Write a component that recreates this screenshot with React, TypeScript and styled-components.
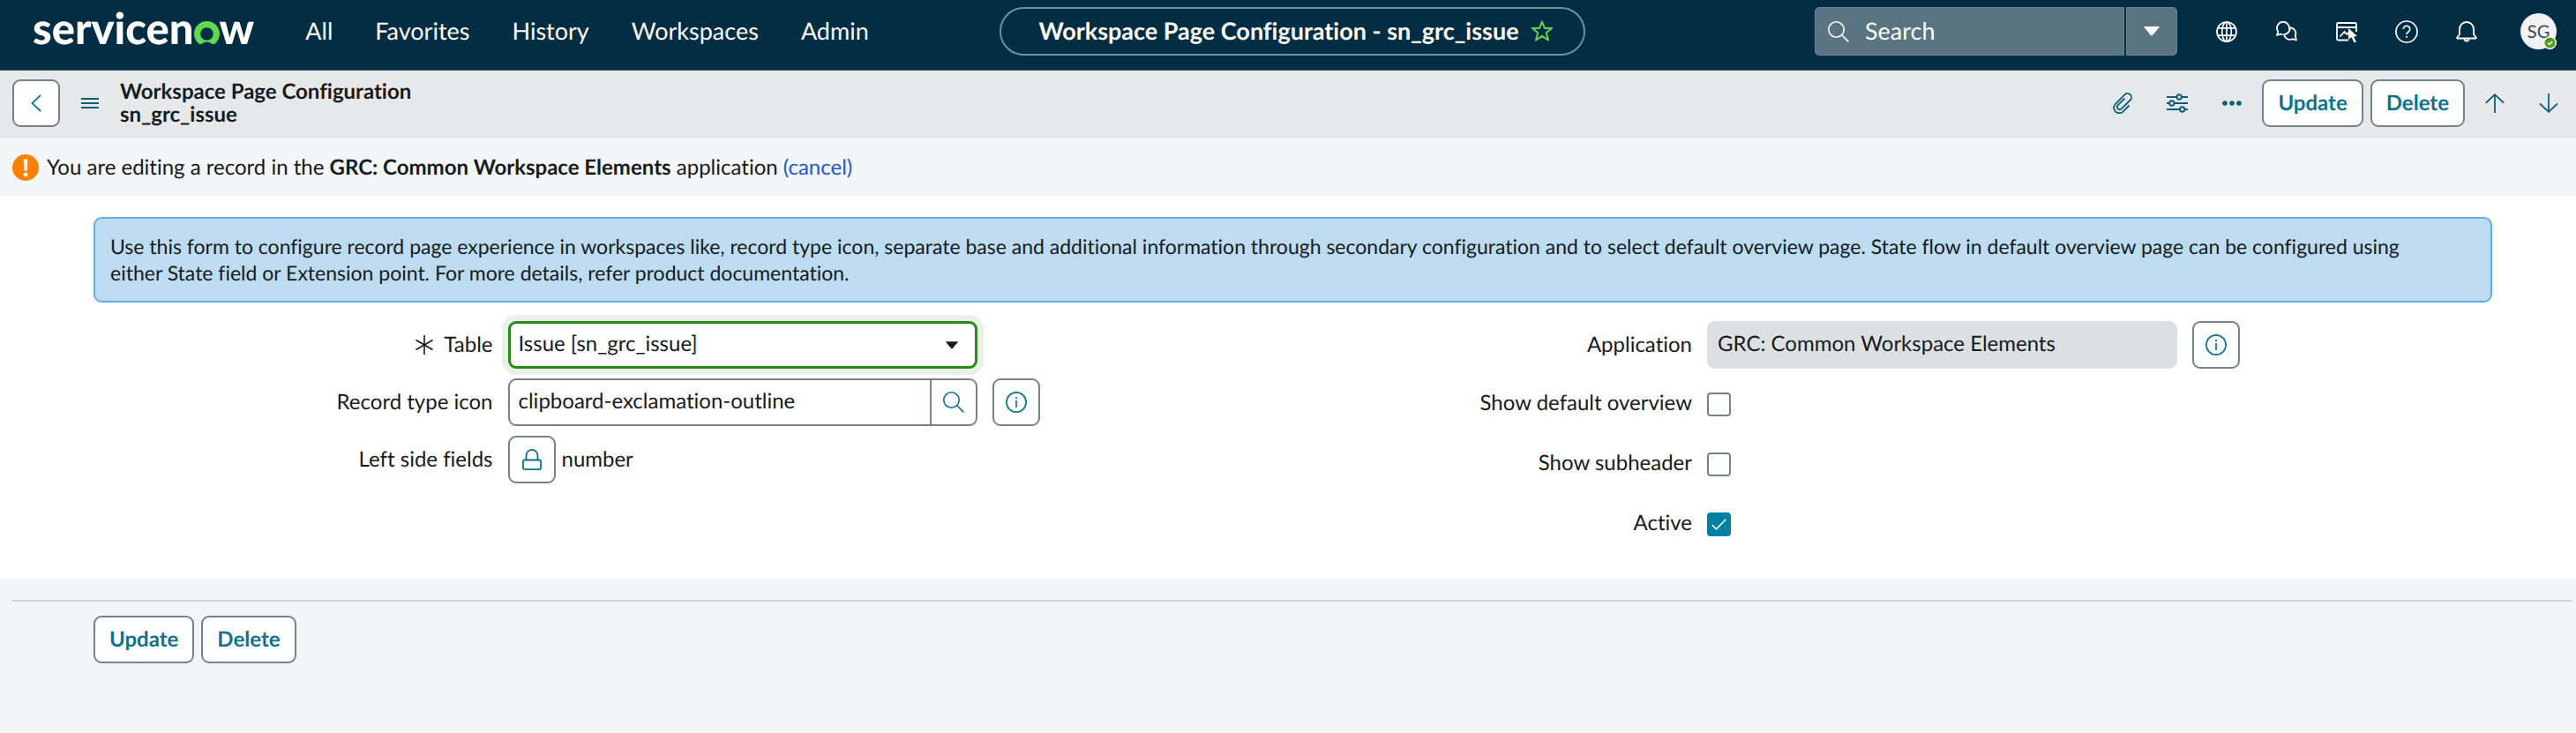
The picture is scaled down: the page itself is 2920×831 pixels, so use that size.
import React from "react";
import styled, { createGlobalStyle, css } from "styled-components";

const teal = "#0b7391";
const tealDark = "#0c5f79";

const GlobalStyle = createGlobalStyle`
  * { box-sizing: border-box; }
  html { height: 100%; background: #f4f5f7; }
  body {
    margin: 0;
    font-family: Lato, "Liberation Sans", sans-serif;
    font-size: 24px;
    line-height: 30px;
    font-variant-ligatures: none;
    text-rendering: geometricPrecision;
    color: #161b1c;
  }
  button, input, select {
    font: inherit;
    font-variant-ligatures: none;
    text-rendering: geometricPrecision;
    color: inherit;
    margin: 0;
  }
  button { cursor: pointer; }
`;

/* ---------- Global navigation ---------- */

const TopBar = styled.header`
  display: flex;
  align-items: flex-start;
  justify-content: space-between;
  height: 80px;
  padding: 8px 22px 0 37px;
  background: #032d42;
  border-bottom: 1px solid #2a4f62;
  color: #fff;
`;

const BarSide = styled.div<{ $end?: boolean }>`
  display: flex;
  flex: 1 1 0;
  align-items: center;
  justify-content: ${(p) => (p.$end ? "flex-end" : "flex-start")};
  height: 55px;
  min-width: 0;
`;

const Logo = styled.a`
  display: flex;
  align-items: baseline;
  margin: 0 58px 6px 0;
  color: #fff;
  font-size: 49px;
  font-weight: 900;
  line-height: 49px;
  text-decoration: none;

  svg { width: 29px; height: 26px; overflow: visible; }
`;

const Nav = styled.nav`
  display: flex;
  gap: 48px;
  padding-bottom: 2px;

  a {
    color: #fff;
    font-size: 27px;
    text-decoration: none;
  }
`;

const TitlePill = styled.div`
  display: flex;
  align-items: center;
  gap: 14px;
  height: 55px;
  margin-right: 5px;
  padding: 0 35px 2px 42px;
  border: 2px solid #74909b;
  border-radius: 28px;
  font-size: 27px;
  font-weight: 700;
  white-space: nowrap;
`;

const PlainButton = styled.button<{ $tone?: string }>`
  display: inline-flex;
  align-items: center;
  justify-content: center;
  padding: 0;
  border: 0;
  background: none;
  color: ${(p) => p.$tone ?? "inherit"};
`;

const SearchGroup = styled.div`
  display: flex;
  gap: 2px;
  height: 55px;
`;

const SearchField = styled.label`
  display: flex;
  align-items: center;
  gap: 18px;
  width: 351px;
  padding: 0 14px;
  border: 1px solid #6b8390;
  border-radius: 5px 0 0 5px;
  background: #5b7482;

  input {
    flex: 1;
    min-width: 0;
    padding: 0 0 2px;
    border: 0;
    outline: 0;
    background: none;
    font-size: 27px;
  }
  input::placeholder { color: #fff; opacity: 1; }
`;

const SearchScope = styled.button`
  display: flex;
  align-items: center;
  justify-content: center;
  width: 58px;
  padding: 0;
  border: 1px solid #6b8390;
  border-radius: 0 5px 5px 0;
  background: #5b7482;
  color: #fff;
`;

const Utilities = styled.div`
  display: flex;
  align-items: center;
  gap: 44px;
  margin-left: 44px;
`;

const HelpButton = styled(PlainButton)`
  margin: 0 -1px;
`;

const Avatar = styled.button`
  position: relative;
  width: 41px;
  height: 41px;
  margin-left: 5px;
  padding: 0;
  border: 0;
  border-radius: 50%;
  background: #f1f2f3;
  color: #3c454b;
  font-size: 20px;

  svg { position: absolute; right: 0; bottom: 0; }
`;

/* ---------- Record header ---------- */

const RecordBar = styled.div`
  display: flex;
  align-items: center;
  height: 76px;
  padding: 0 20px 2px 14px;
  border-bottom: 1px solid #dddfe1;
  background: #e6e8ea;
`;

const buttonBox = css`
  height: 54px;
  border: 2px solid #74828a;
  border-radius: 9px;
  background: #fff;
  color: ${teal};
`;

const SquareButton = styled.button`
  ${buttonBox}
  display: inline-flex;
  align-items: center;
  justify-content: center;
  flex: none;
  width: 54px;
  padding: 0;
`;

const ActionButton = styled.button`
  ${buttonBox}
  padding: 0 16px;
  font-weight: 700;
`;

const ButtonPair = styled.div`
  display: flex;
  gap: 8px;
`;

const RecordTitle = styled.h1`
  margin: 0;
  font-size: 24px;
  font-weight: 700;
  line-height: 26px;

  span { display: block; }
`;

const Tools = styled.div`
  display: flex;
  align-items: center;
  gap: 39px;
  margin-left: auto;
`;

const MenuButton = styled(PlainButton)`
  margin: 0 24px;
`;

const ToolActions = styled(ButtonPair)`
  margin: 0 -16px;
`;

const Notice = styled.div`
  display: flex;
  align-items: center;
  gap: 9px;
  height: 67px;
  padding: 0 14px;
  background: #f4f5f7;

  p { margin: 0; }
  a { color: #2158d4; text-decoration: none; }
`;

/* ---------- Form ---------- */

const FormPanel = styled.form`
  padding: 23px 95px 42px 106px;
  background: #fff;
`;

const Hint = styled.p`
  margin: 0 0 21px;
  padding: 16px 48px 17px 17px;
  border: 2px solid #62b0e6;
  border-radius: 9px;
  background: #bddbf1;
  font-size: 23px;
`;

const Columns = styled.div`
  display: grid;
  grid-template-columns: 1fr 1fr;
`;

const Column = styled.div<{ $gap: number }>`
  display: flex;
  flex-direction: column;
  gap: ${(p) => p.$gap}px;
`;

const Row = styled.div`
  display: grid;
  grid-template-columns: 452fr 532fr 340fr;
  column-gap: 17px;
  align-items: center;
  min-height: 54px;
`;

const FieldLabel = styled.label`
  display: flex;
  align-items: center;
  justify-content: flex-end;
  gap: 12px;
  text-align: right;
`;

const SelectWrap = styled.div`
  display: grid;
  align-items: center;

  > * { grid-area: 1 / 1; }
  svg { justify-self: end; margin-right: 22px; pointer-events: none; }
`;

const Select = styled.select`
  appearance: none;
  width: 100%;
  height: 54px;
  padding: 0 9px 3px;
  border: 3px solid #278c14;
  border-radius: 9px;
  outline: 0;
  background: #fff;
  box-shadow: 0 0 0 7px #e9f2e7;
`;

const Lookup = styled.div`
  display: flex;
  height: 54px;
  overflow: hidden;
  border: 2px solid #74828a;
  border-radius: 9px;

  input {
    flex: 1;
    min-width: 0;
    padding: 0 10px 3px;
    border: 0;
    outline: 0;
    background: none;
  }
  button {
    width: 52px;
    border-left: 2px solid #74828a;
  }
`;

const ReadOnlyInput = styled.input`
  width: 100%;
  height: 54px;
  padding: 0 12px 3px;
  border: 0;
  border-radius: 9px;
  outline: 0;
  background: #dce0e3;
`;

const Locked = styled.div`
  display: flex;
  align-items: center;
  gap: 7px;
`;

const CheckRow = styled(Row)`
  min-height: 42px;
`;

const Checks = styled.div`
  display: flex;
  flex-direction: column;
  gap: 26px;
`;

const CheckWrap = styled.div`
  display: grid;
  align-items: center;
  justify-content: start;
  padding-top: 3px;

  > * { grid-area: 1 / 1; }
  svg { justify-self: center; pointer-events: none; }
`;

const Check = styled.input`
  appearance: none;
  width: 27px;
  height: 27px;
  margin: 0;
  border: 2px solid #74828a;
  border-radius: 4px;
  background: #fff;

  &:checked {
    border-color: #0080a3;
    background: #0080a3;
  }
`;

const Footer = styled.footer`
  padding: 24px 4px 0 14px;
`;

const Rule = styled.hr`
  height: 2px;
  margin: 0 0 16px;
  border: 0;
  background: #cfd2d4;
`;

const FooterActions = styled(ButtonPair)`
  padding-left: 92px;
`;

/* ---------- Icons ---------- */

type IconProps = { size?: number; w?: number; stroke?: number; children: React.ReactNode };

const Icon = ({ size = 24, w = size, stroke = 2, children }: IconProps) => (
  <svg
    width={w}
    height={size}
    viewBox={`0 0 ${w} ${size}`}
    fill="none"
    stroke="currentColor"
    strokeWidth={stroke}
    aria-hidden="true"
  >
    {children}
  </svg>
);

const SearchIcon = () => (
  <Icon stroke={1.6}>
    <circle cx="9.5" cy="9.5" r="8.7" />
    <path d="M15.8 15.8 23.4 23.4" />
  </Icon>
);

const InfoIcon = () => (
  <Icon stroke={1.7}>
    <circle cx="12" cy="12" r="11.1" />
    <path d="M12 9.8V18" />
    <path d="M12 6V8" />
  </Icon>
);

const LockIcon = () => (
  <Icon w={22} stroke={1.8}>
    <rect x="1" y="12.5" width="20" height="10.6" rx="1.6" />
    <path d="M4.5 12.5V7.4a6.5 6.5 0 0 1 13 0V12.5" />
  </Icon>
);

const Caret = ({ w = 16, h = 10 }: { w?: number; h?: number }) => (
  <svg width={w} height={h} viewBox="0 0 16 10" aria-hidden="true">
    <path d="M.6 0h14.8q1 0 .3.9L8.8 9q-.8.9-1.6 0L.3.9Q-.4 0 .6 0Z" fill="currentColor" />
  </svg>
);

const InfoButton = ({ label }: { label: string }) => (
  <SquareButton type="button" aria-label={label}>
    <InfoIcon />
  </SquareButton>
);

const CheckField = ({ id, label, checked }: { id: string; label: string; checked?: boolean }) => (
  <CheckRow>
    <FieldLabel htmlFor={id}>{label}</FieldLabel>
    <CheckWrap>
      <Check id={id} type="checkbox" defaultChecked={checked} />
      {checked && (
        <svg width="17" height="13" viewBox="0 0 17 13" fill="none" stroke="#fff" strokeWidth="1.6" aria-hidden="true">
          <path d="M.7 7 5.5 11.8 16.3.8" />
        </svg>
      )}
    </CheckWrap>
  </CheckRow>
);

export default function App() {
  return (
    <>
      <GlobalStyle />
      <TopBar>
        <BarSide>
          <Logo href="#" aria-label="servicenow">
            servicen
            <svg viewBox="0 0 29 26" aria-hidden="true">
              <path
                fill="#62d84e"
                d="M14.5 0C6.4 0 0 6.3 0 14.2 0 18.6 2 22.7 5.3 25.4c1 .9 2.6.9 3.7.1 1.5-1.1 3.4-1.7 5.5-1.7s4 .6 5.5 1.7c1.1.8 2.6.8 3.7-.1C27 22.7 29 18.6 29 14.2 29 6.3 22.6 0 14.5 0Zm0 21.5c-4.2 0-7.2-3.1-7.2-7.1s3-7.2 7.2-7.2 7.2 3.2 7.2 7.2-3 7.1-7.2 7.1Z"
              />
            </svg>
            w
          </Logo>
          <Nav aria-label="Main">
            {["All", "Favorites", "History", "Workspaces", "Admin"].map((item) => (
              <a key={item} href="#">
                {item}
              </a>
            ))}
          </Nav>
        </BarSide>

        <TitlePill>
          Workspace Page Configuration - sn_grc_issue
          <PlainButton type="button" aria-label="Add to favorites" $tone="#5fd64b">
            <Icon>
              <path strokeLinejoin="round" d="M12 1.5 15 9h8l-6.3 5.2L19 22.5l-7-4.6-7 4.6 2.3-8.3L1 9h8Z" />
            </Icon>
          </PlainButton>
        </TitlePill>

        <BarSide $end>
          <SearchGroup role="search">
            <SearchField>
              <SearchIcon />
              <input type="text" placeholder="Search" aria-label="Search" />
            </SearchField>
            <SearchScope type="button" aria-label="Search scope">
              <Caret w={18} h={11} />
            </SearchScope>
          </SearchGroup>
          <Utilities>
            <PlainButton type="button" aria-label="Scope">
              <Icon stroke={1.7}>
                <circle cx="12" cy="12" r="11" />
                <ellipse cx="12" cy="12" rx="5.3" ry="11" />
                <path d="M2 7.8H22M2 16.2H22M12 1V23" />
              </Icon>
            </PlainButton>
            <PlainButton type="button" aria-label="Conversations">
              <Icon stroke={1.8}>
                <path strokeLinejoin="round" d="M7.6 15.2 5.2 14.7 1 15.9 2.2 11.7A7 7 0 1 1 14.8 9.5" />
                <path
                  strokeLinejoin="round"
                  d="M15.8 7.3a6.6 6.6 0 0 1 6 9.3l1.2 4.9-4.7-1.3a6.7 6.7 0 0 1-9.3-5.1 7.2 7.2 0 0 0 6.8-7.8Z"
                />
              </Icon>
            </PlainButton>
            <PlainButton type="button" aria-label="Page preview">
              <Icon stroke={1.8}>
                <path d="M14 21.5H2.5A1.5 1.5 0 0 1 1 20V3.500A1.500 1.500 0 0 1 2.500 2h19A1.500 1.500 0 0 1 23 3.500V12M1 7H23M4.500 17.500 9.500 12l3 3 2.500-3" />
                <path d="M14 8 24 17l-4 .5 3 6-2.500 1-3-6.500L14 21Z" fill="currentColor" stroke="none" />
              </Icon>
            </PlainButton>
            <HelpButton type="button" aria-label="Help">
              <Icon size={26} stroke={1.7}>
                <circle cx="13" cy="13" r="12" />
                <path d="M9.3 10a3.7 3.7 0 1 1 5.6 3.2Q13 14.2 13 16" />
                <path d="M13 17.8v2" />
              </Icon>
            </HelpButton>
            <PlainButton type="button" aria-label="Notifications">
              <Icon stroke={1.8}>
                <path
                  strokeLinejoin="round"
                  d="M4 15V9a8 8 0 0 1 16 0v6l2.6 3.2q.8 1.3-.6 1.3H2q-1.4 0-.6-1.3ZM9.5 20a2.5 2.5 0 0 0 5 0"
                />
              </Icon>
            </PlainButton>
            <Avatar type="button" aria-label="SG, available">
              SG
              <svg width="15" height="15" viewBox="0 0 15 15" aria-hidden="true">
                <circle cx="7.5" cy="7.5" r="6.8" fill="#4ba00e" stroke="#fff" strokeWidth="1.4" />
                <path d="m5 7.7 1.8 1.7L10.2 6" fill="none" stroke="#fff" strokeWidth="1.6" />
              </svg>
            </Avatar>
          </Utilities>
        </BarSide>
      </TopBar>

      <RecordBar>
        <SquareButton type="button" aria-label="Back">
          <Icon size={20} w={12} stroke={1.8}>
            <path d="M11 .8 1.5 10 11 19.2" />
          </Icon>
        </SquareButton>
        <MenuButton type="button" aria-label="Record menu" $tone={tealDark}>
          <Icon size={14} w={20}>
            <path d="M0 2H20M0 7H20M0 12H20" />
          </Icon>
        </MenuButton>
        <RecordTitle>
          <span>Workspace Page Configuration</span>
          <span>sn_grc_issue</span>
        </RecordTitle>
        <Tools>
          <PlainButton type="button" aria-label="Attachments" $tone={tealDark}>
            <Icon w={22} stroke={1.8}>
              <path d="M18.5 14.5 11.8 21.3a6 6 0 0 1-9-8.3L13.3 2.3a4.3 4.3 0 0 1 6.4 6.2L10 18.2a2.9 2.9 0 0 1-4.2-4L13.5 6.5" />
            </Icon>
          </PlainButton>
          <PlainButton type="button" aria-label="Personalize form" $tone={tealDark}>
            <Icon stroke={1.9}>
              <path d="M0 5H11.5M17 5H24M0 12H3M8.5 12H24M0 19H15M20.5 19H24" />
              <circle cx="14.2" cy="5" r="2.7" />
              <circle cx="5.8" cy="12" r="2.7" />
              <circle cx="17.7" cy="19" r="2.7" />
            </Icon>
          </PlainButton>
          <PlainButton type="button" aria-label="More options" $tone={tealDark}>
            <svg width="22" height="6" viewBox="0 0 22 6" fill="currentColor" aria-hidden="true">
              <circle cx="3" cy="3" r="2.8" />
              <circle cx="11" cy="3" r="2.8" />
              <circle cx="19" cy="3" r="2.8" />
            </svg>
          </PlainButton>
          <ToolActions>
            <ActionButton type="button">Update</ActionButton>
            <ActionButton type="button">Delete</ActionButton>
          </ToolActions>
          <PlainButton type="button" aria-label="Previous record" $tone={tealDark}>
            <Icon size={22} w={22} stroke={1.8}>
              <path d="M11 22V1.5M1 10.5l10-9.3 10 9.3" />
            </Icon>
          </PlainButton>
          <PlainButton type="button" aria-label="Next record" $tone={tealDark}>
            <Icon size={22} w={22} stroke={1.8}>
              <path d="M11 0V20.5M1 11.5l10 9.3 10-9.3" />
            </Icon>
          </PlainButton>
        </Tools>
      </RecordBar>

      <Notice role="status">
        <svg width="30" height="30" viewBox="0 0 30 30" aria-hidden="true">
          <circle cx="15" cy="15" r="15" fill="#ff8000" />
          <path d="M12.8 5.5h4.4l-.4 13h-3.6Z" fill="#fff" />
          <circle cx="15" cy="23" r="2.4" fill="#fff" />
        </svg>
        <p>
          You are editing a record in the <b>GRC: Common Workspace Elements</b> application <a href="#">(cancel)</a>
        </p>
      </Notice>

      <FormPanel>
        <Hint>
          Use this form to configure record page experience in workspaces like, record type icon, separate base and
          additional information through secondary configuration and to select default overview page. State flow in
          default overview page can be configured using either State field or Extension point. For more details, refer
          product documentation.
        </Hint>
        <Columns>
          <Column $gap={11}>
            <Row>
              <FieldLabel htmlFor="table">
                <Icon size={22} w={20} stroke={1.6}>
                  <path d="M10 0V22M.5 5.5l19 11M19.5 5.5.5 16.5" />
                </Icon>
                Table
              </FieldLabel>
              <SelectWrap>
                <Select id="table">
                  <option>Issue [sn_grc_issue]</option>
                </Select>
                <Caret w={14} h={9} />
              </SelectWrap>
            </Row>
            <Row>
              <FieldLabel htmlFor="icon">Record type icon</FieldLabel>
              <Lookup>
                <input id="icon" type="text" defaultValue="clipboard-exclamation-outline" />
                <PlainButton type="button" aria-label="Look up icon" $tone={teal}>
                  <SearchIcon />
                </PlainButton>
              </Lookup>
              <InfoButton label="Preview icon record" />
            </Row>
            <Row>
              <FieldLabel as="span">Left side fields</FieldLabel>
              <Locked>
                <SquareButton type="button" aria-label="Unlock left side fields">
                  <LockIcon />
                </SquareButton>
                number
              </Locked>
            </Row>
          </Column>
          <Column $gap={18}>
            <Row>
              <FieldLabel htmlFor="application">Application</FieldLabel>
              <ReadOnlyInput id="application" type="text" readOnly value="GRC: Common Workspace Elements" />
              <InfoButton label="Preview application record" />
            </Row>
            <Checks>
              <CheckField id="overview" label="Show default overview" />
              <CheckField id="subheader" label="Show subheader" />
              <CheckField id="active" label="Active" checked />
            </Checks>
          </Column>
        </Columns>
      </FormPanel>

      <Footer>
        <Rule />
        <FooterActions>
          <ActionButton type="button">Update</ActionButton>
          <ActionButton type="button">Delete</ActionButton>
        </FooterActions>
      </Footer>
    </>
  );
}
